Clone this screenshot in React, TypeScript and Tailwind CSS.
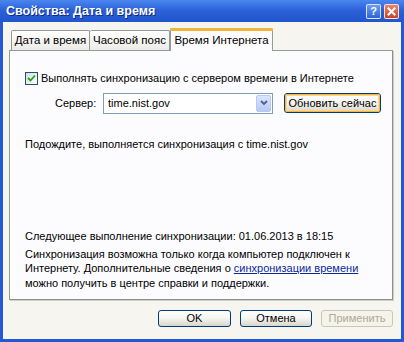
import React from 'react';

const font = { fontFamily: '"Liberation Sans", Arial, sans-serif' };

function XpButton({ label, disabled, focused, className }: { label: string; disabled?: boolean; focused?: boolean; className?: string }) {
  if (disabled) {
    return (
      <div className={`flex items-center justify-center rounded-[3px] border border-[#c9c7ba] bg-[#f5f4ea] text-[#aca899] ${className ?? ''}`}>
        {label}
      </div>
    );
  }
  return (
    <div className={`rounded-[3px] border border-[#003c74] bg-gradient-to-b from-white via-[#f4f4f0] to-[#d8d5cb] ${className ?? ''}`}>
      <div
        className={`flex h-full w-full items-center justify-center rounded-[2px] border ${
          focused ? 'border-[#f5b54a] shadow-[inset_0_0_0_1px_#fbd889]' : 'border-transparent'
        } text-black`}
      >
        {label}
      </div>
    </div>
  );
}

export default function App() {
  return (
    <div className="w-[404px] h-[342px] overflow-hidden bg-[#f6f5f0] text-[11px] text-black" style={font}>
      <div className="flex h-full flex-col border-x-[3px] border-b-[3px] border-[#2458d4]">
        {/* Title bar */}
        <div className="-mx-[3px] flex h-[22px] items-center justify-between bg-gradient-to-b from-[#4a86ee] via-[#2a5fd8] to-[#2256cf] pl-[6px] pr-[5px]">
          <span className="text-[12.5px] font-bold text-white [text-shadow:1px_1px_0_#0a2a8a]">
            Свойства: Дата и время
          </span>
          <div className="flex gap-[3px] pt-[1px]">
            <div className="flex h-[15px] w-[15px] items-center justify-center rounded-[2px] border border-white/80 bg-gradient-to-b from-[#6d9cf3] to-[#2f62d9] text-[11px] font-bold leading-none text-white">
              ?
            </div>
            <div className="flex h-[15px] w-[15px] items-center justify-center rounded-[2px] border border-white/80 bg-gradient-to-b from-[#e8866a] to-[#c9441f]">
              <svg width="9" height="9" viewBox="0 0 9 9">
                <path d="M1.5 1.5 L7.5 7.5 M7.5 1.5 L1.5 7.5" stroke="white" strokeWidth="2" strokeLinecap="square" />
              </svg>
            </div>
          </div>
        </div>

        {/* Body */}
        <div className="flex flex-1 flex-col pl-[6px] pr-[8px] pt-[6px]">
          {/* Tabs */}
          <div className="relative z-10 flex h-[22px] items-end pl-[2px] text-[11.5px]">
            <div className="flex h-[20px] w-[79px] items-center justify-center rounded-t-[2px] border border-b-0 border-[#919b9c] bg-gradient-to-b from-white to-[#ecebe6]">
              Дата и время
            </div>
            <div className="flex h-[20px] w-[80px] items-center justify-center rounded-t-[2px] border border-b-0 border-l-0 border-[#919b9c] bg-gradient-to-b from-white to-[#ecebe6]">
              Часовой пояс
            </div>
            <div className="-mb-px flex h-[23px] w-[103px] flex-col rounded-t-[2px] border-x border-[#919b9c] bg-[#fcfcfe]">
              <div className="h-[3px] rounded-t-[2px] bg-[#f0b43c] -mx-px" />
              <div className="flex flex-1 items-center justify-center">Время Интернета</div>
            </div>
          </div>

          {/* Panel */}
          <div className="flex h-[250px] flex-col border border-[#919b9c] border-r-[#8b8f8e] border-b-[#8b8f8e] bg-[#fcfcfe] pl-[15px] shadow-[1px_1px_0_#d0cfc6]">
            <div className="mt-[19px] flex items-center gap-[3px]">
              <div className="flex h-[13px] w-[13px] items-center justify-center border border-[#1c5180] bg-gradient-to-br from-[#dcdcd5] to-white">
                <svg width="9" height="9" viewBox="0 0 9 9">
                  <path d="M1 4 L3.5 6.5 L8 1.5" fill="none" stroke="#21a121" strokeWidth="1.8" />
                </svg>
              </div>
              <span>Выполнять синхронизацию с сервером времени в Интернете</span>
            </div>

            <div className="mt-[6px] flex items-center">
              <span className="ml-[30px] w-[48px]">Сервер:</span>
              <div className="flex h-[21px] w-[170px] items-center border border-[#7f9db9] bg-white pl-[4px]">
                <span className="flex-1">time.nist.gov</span>
                <div className="mr-px flex h-[17px] w-[15px] items-center justify-center rounded-[2px] border border-[#b8c9f2] bg-gradient-to-b from-[#dbe6fe] to-[#b6c8f6]">
                  <svg width="8" height="6" viewBox="0 0 8 6">
                    <path d="M1 1 L4 4 L7 1" fill="none" stroke="#4d6185" strokeWidth="1.8" />
                  </svg>
                </div>
              </div>
              <XpButton label="Обновить сейчас" focused className="ml-[11px] h-[20px] w-[97px]" />
            </div>

            <div className="mt-[22px]">Подождите, выполняется синхронизация с time.nist.gov</div>

            <div className="mt-[76px]">Следующее выполнение синхронизации: 01.06.2013 в 18:15</div>

            <div className="mt-[2px] pr-[10px] leading-[14.5px]">
              Синхронизация возможна только когда компьютер подключен к
              <br />
              Интернету. Дополнительные сведения о{' '}
              <span className="text-[#0b2a9a] underline">синхронизации времени</span>
              <br />
              можно получить в центре справки и поддержки.
            </div>
          </div>

          {/* Bottom buttons */}
          <div className="mt-[10px] flex justify-end gap-[9px]">
            <XpButton label="OK" className="h-[17px] w-[73px]" />
            <XpButton label="Отмена" className="h-[17px] w-[72px]" />
            <XpButton label="Применить" disabled className="h-[17px] w-[72px]" />
          </div>
        </div>
      </div>
    </div>
  );
}
